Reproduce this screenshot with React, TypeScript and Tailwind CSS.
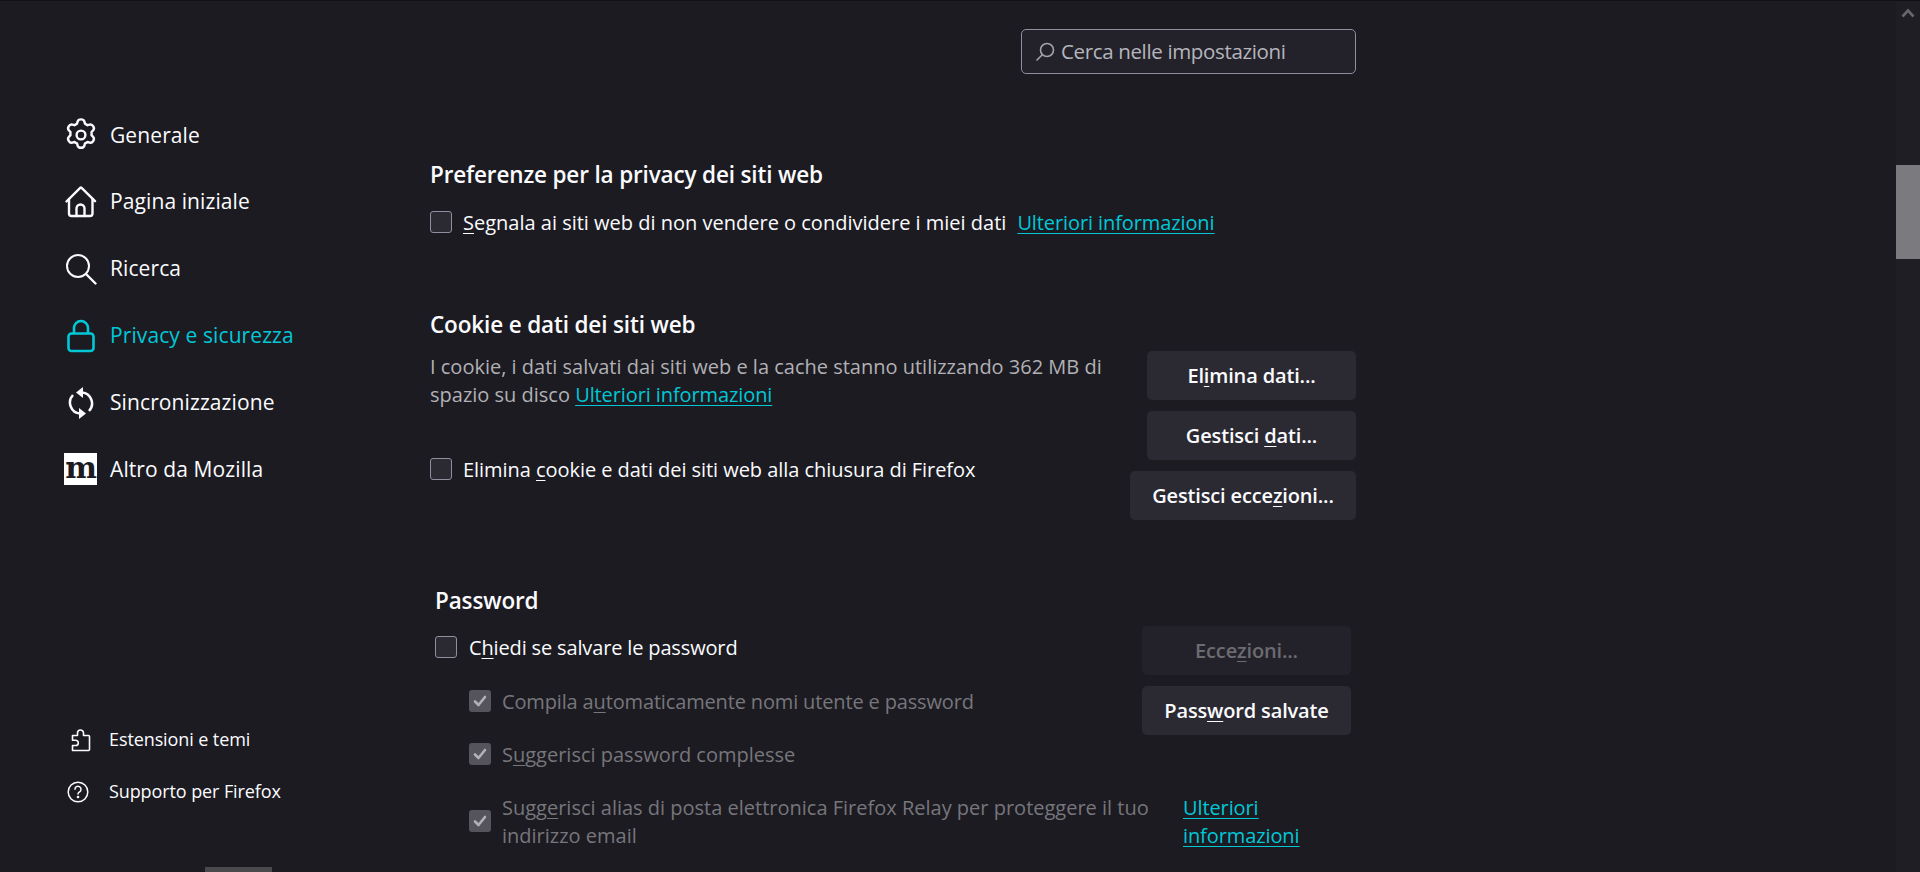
import { ReactNode } from "react";

const navItems = [
  { label: "Generale", icon: <GearIcon /> },
  { label: "Pagina iniziale", icon: <HomeIcon /> },
  { label: "Ricerca", icon: <SearchIcon /> },
  { label: "Privacy e sicurezza", icon: <LockIcon />, active: true },
  { label: "Sincronizzazione", icon: <SyncIcon /> },
  { label: "Altro da Mozilla", icon: <MozillaIcon /> },
];

function GearIcon() {
  return (
    <svg width="32" height="34" viewBox="0 0 32 34" fill="none" stroke="currentColor" strokeWidth="2.4" strokeLinejoin="round">
      <path d="M12.6 3.6c.4-1.5 1.6-2.2 3.4-2.2s3 .7 3.4 2.2l.6 2.2c.9.3 1.7.8 2.5 1.4l2.2-.6c1.5-.4 2.7.3 3.6 1.8s.9 2.9-.2 4l-1.600 1.600c.2.9.2 1.900 0 2.800v.4l1.600 1.600c1.100 1.100 1.100 2.500.2 4s-2.100 2.200-3.600 1.800l-2.200-.6c-.8.6-1.600 1.100-2.500 1.400l-.6 2.200c-.4 1.500-1.600 2.200-3.400 2.200s-3-.7-3.400-2.200l-.6-2.200c-.9-.3-1.700-.8-2.500-1.400l-2.200.6c-1.500.4-2.700-.3-3.600-1.800s-.9-2.900.2-4l1.600-1.600c-.2-1.100-.2-2.100 0-3.200L3.900 12.400c-1.100-1.100-1.100-2.500-.2-4s2.100-2.200 3.600-1.800l2.200.6c.8-.6 1.600-1.100 2.500-1.400z" />
      <circle cx="16" cy="17" r="4.400" />
    </svg>
  );
}

function HomeIcon() {
  return (
    <svg width="32" height="32" viewBox="0 0 32 32" fill="none" stroke="currentColor" strokeWidth="2.400" strokeLinejoin="round" strokeLinecap="round">
      <path d="M1.500 15.500 15.200 1.800a1 1 0 0 1 1.400 0L30 15.200" />
      <path d="M4 13v14.500A2.500 2.500 0 0 0 6.500 30h18.500a2.500 2.500 0 0 0 2.500-2.500V13" />
      <path d="M11.500 30v-7.500a4 4 0 0 1 8 0V30" />
    </svg>
  );
}

function SearchIcon() {
  return (
    <svg width="32" height="32" viewBox="0 0 32 32" fill="none" stroke="currentColor" strokeWidth="2" strokeLinecap="round">
      <circle cx="13" cy="13" r="11" />
      <path d="m21.500 21.500 9 9" strokeWidth="2.400" />
    </svg>
  );
}

function LockIcon() {
  return (
    <svg width="28" height="34" viewBox="0 0 28 34" fill="none" stroke="currentColor" strokeWidth="2.600">
      <path d="M7 15V9a7 7 0 0 1 14 0v6" />
      <rect x="1.500" y="14.500" width="25" height="17.500" rx="3" />
    </svg>
  );
}

function SyncIcon() {
  return (
    <svg width="26" height="34" viewBox="0 0 26 34" fill="none" stroke="currentColor" strokeWidth="2.500">
      <path d="M14 6.500A11 11 0 0 1 21 25" />
      <path d="M12 27.500A11 11 0 0 1 5 9" />
      <path d="M15 1v11l-7-5.500z" fill="currentColor" stroke="none" />
      <path d="M11 33V22l7 5.500z" fill="currentColor" stroke="none" />
    </svg>
  );
}

function MozillaIcon() {
  return (
    <span className="flex h-[32px] w-[33px] items-start justify-center bg-white font-['DejaVu_Serif',serif] text-[30px] leading-[30px] font-black tracking-[-1px] text-[#1c1b22]">
      m
    </span>
  );
}

function PuzzleIcon() {
  return (
    <svg width="20" height="24" viewBox="0 0 20 24" fill="none" stroke="currentColor" strokeWidth="1.600" strokeLinejoin="round">
      <path d="M1.500 22.500V17.500h3.200a2.600 2.600 0 0 0 0-5.200H1.500V7.500h5V5a3 3 0 0 1 6 0v2.500h5a1 1 0 0 1 1 1V21.500a1 1 0 0 1-1 1z" />
    </svg>
  );
}

function HelpIcon() {
  return (
    <svg width="22" height="22" viewBox="0 0 22 22" fill="none" stroke="currentColor" strokeWidth="1.500" strokeLinecap="round">
      <circle cx="11" cy="11" r="9.800" />
      <path d="M8 8.300a3 3 0 1 1 4.600 2.500c-1 .7-1.600 1.100-1.600 2.200" />
      <circle cx="11" cy="16" r=".6" fill="currentColor" />
    </svg>
  );
}

function Key({ children }: { children: ReactNode }) {
  return <span className="underline decoration-1 underline-offset-[3px]">{children}</span>;
}

function Checkbox({ checked }: { checked?: boolean }) {
  if (checked) {
    return (
      <span className="-mt-[3px] flex h-[22px] w-[22px] shrink-0 items-center justify-center rounded-[3px] bg-[#55545c]">
        <svg width="14" height="12" viewBox="0 0 14 12" fill="none" stroke="#b2b1b6" strokeWidth="2.600" strokeLinecap="round" strokeLinejoin="round">
          <path d="m2 6.500 3.500 3.500L12 2" />
        </svg>
      </span>
    );
  }
  return <span className="-mt-[3px] h-[22px] w-[22px] shrink-0 rounded-[3px] border border-[#8f8f9d] bg-[#2b2a33]" />;
}

function SettingButton({ children, wide, disabled }: { children: ReactNode; wide?: boolean; disabled?: boolean }) {
  return (
    <button
      className={
        (wide ? "w-[226px] " : "w-[209px] ") +
        (disabled ? "bg-[#23222b] text-[#6c6b70] " : "bg-[#2b2a33] text-[#fbfbfe] ") +
        "h-[49px] shrink-0 rounded-[5px] text-center text-[20px] font-semibold tracking-[-0.15px]"
      }
    >
      {children}
    </button>
  );
}

function InfoLink({ children }: { children: ReactNode }) {
  return <a className="tracking-[-0.1px] text-[#00c8d7] underline decoration-1 underline-offset-[3px]">{children}</a>;
}

export default function App() {
  return (
    <div className="relative flex h-[872px] w-[1920px] overflow-hidden border-t border-t-[#111014] bg-[#1c1b22] font-['Open_Sans',sans-serif] text-[20px] text-[#fbfbfe]">
      <aside className="flex w-[430px] shrink-0 flex-col pl-[64px]">
        <nav className="mt-[101px] flex flex-col">
          {navItems.map((item) => (
            <div
              key={item.label}
              className={"flex h-[66.800px] items-center " + (item.active ? "text-[#00c8d7]" : "text-[#fbfbfe]")}
            >
              <span className="flex w-[46px] items-center justify-center pr-[13px]">{item.icon}</span>
              <span className="text-[21px] tracking-[0.1px]">{item.label}</span>
            </div>
          ))}
        </nav>
        <div className="mt-auto mb-[65px] flex flex-col gap-[21px] text-[18px] tracking-[-0.1px]">
          <div className="flex h-[31px] items-center">
            <span className="ml-[5px] flex w-[40px] items-center pl-[2px]"><PuzzleIcon /></span>
            <span>Estensioni e temi</span>
          </div>
          <div className="flex h-[31px] items-center">
            <span className="ml-[3px] flex w-[42px] items-center"><HelpIcon /></span>
            <span>Supporto per Firefox</span>
          </div>
        </div>
      </aside>

      <main className="w-[926px] shrink-0">
        <div className="flex justify-end pt-[28px]">
          <div className="flex h-[45px] w-[335px] items-center rounded-[5px] border border-[#8f8f9d] bg-[#23222b] pl-[13px] text-[#b5b5bc]">
            <svg width="20" height="20" viewBox="0 0 20 20" fill="none" stroke="#a3a3aa" strokeWidth="1.600" strokeLinecap="round">
              <circle cx="12" cy="8" r="6.500" />
              <path d="M7 13 2 18" />
            </svg>
            <span className="ml-[6px] text-[20.500px] tracking-[-0.35px]">Cerca nelle impostazioni</span>
          </div>
        </div>

        <section className="mt-[85px]">
          <h2 className="h-[32px] text-[22.500px] leading-[32px] font-semibold tracking-[-0.15px]">Preferenze per la privacy dei siti web</h2>
          <div className="mt-[18px] flex h-[28px] items-center gap-[11px]">
            <Checkbox />
            <span><Key>S</Key>egnala ai siti web di non vendere o condividere i miei dati</span>
            <span><InfoLink>Ulteriori informazioni</InfoLink></span>
          </div>
        </section>

        <section className="mt-[72px]">
          <h2 className="h-[32px] text-[22.500px] leading-[32px] font-semibold tracking-[-0.15px]">Cookie e dati dei siti web</h2>
          <div className="flex justify-between">
            <div className="w-[680px]">
              <p className="mt-[12px] leading-[28px] text-[#b1b1b5]">
                I cookie, i dati salvati dai siti web e la cache stanno utilizzando 362 MB di spazio su disco{" "}
                <InfoLink>Ulteriori informazioni</InfoLink>
              </p>
              <div className="mt-[47px] flex h-[28px] items-center gap-[11px]">
                <Checkbox />
                <span className="tracking-[-0.05px]">Elimina <Key>c</Key>ookie e dati dei siti web alla chiusura di Firefox</span>
              </div>
            </div>
            <div className="mt-[10px] flex flex-col items-end gap-[11px]">
              <SettingButton>El<Key>i</Key>mina dati...</SettingButton>
              <SettingButton>Gestisci <Key>d</Key>ati...</SettingButton>
              <SettingButton wide>Gestisci ecce<Key>z</Key>ioni...</SettingButton>
            </div>
          </div>
        </section>

        <section className="mt-[65px] pr-[5px] pl-[5px]">
          <h2 className="h-[32px] text-[22.500px] leading-[32px] font-semibold tracking-[-0.15px]">Password</h2>
          <div className="flex justify-between">
            <div>
              <div className="mt-[17px] flex h-[28px] items-center gap-[12px]">
                <Checkbox />
                <span className="tracking-[-0.15px]">C<Key>h</Key>iedi se salvare le password</span>
              </div>
              <div className="mt-[26px] ml-[34px] flex h-[28px] items-center gap-[11px] text-[#77767b]">
                <Checkbox checked />
                <span className="tracking-[-0.15px]">Compila a<Key>u</Key>tomaticamente nomi utente e password</span>
              </div>
              <div className="mt-[25px] ml-[34px] flex h-[28px] items-center gap-[11px] text-[#77767b]">
                <Checkbox checked />
                <span>S<Key>u</Key>ggerisci password complesse</span>
              </div>
            </div>
            <div className="mt-[9px] flex flex-col gap-[11px]">
              <SettingButton disabled>Ecce<Key>z</Key>ioni...</SettingButton>
              <SettingButton>Pass<Key>w</Key>ord salvate</SettingButton>
            </div>
          </div>
          <div className="mt-[25px] ml-[34px] flex items-center gap-[11px]">
            <Checkbox checked />
            <p className="w-[670px] leading-[28px] text-[#77767b]">
              Sugg<Key>e</Key>risci alias di posta elettronica Firefox Relay per proteggere il tuo indirizzo email
            </p>
            <p className="w-[130px] leading-[28px]"><InfoLink>Ulteriori informazioni</InfoLink></p>
          </div>
        </section>
      </main>

      <div className="ml-auto flex w-[24px] flex-col items-center bg-[#1f1e25]">
        <svg className="mt-[7px]" width="14" height="10" viewBox="0 0 14 10" fill="none" stroke="#67666c" strokeWidth="2.600">
          <path d="m1.500 8.500 5.500-6 5.500 6" />
        </svg>
        <div className="mt-[147px] h-[94px] w-full bg-[#7b7a7f]" />
      </div>

      {/* cut-off element peeking in at the bottom edge */}
      <div className="absolute bottom-0 left-[205px] h-[5px] w-[67px] bg-[#4a4a4d]" />
    </div>
  );
}
